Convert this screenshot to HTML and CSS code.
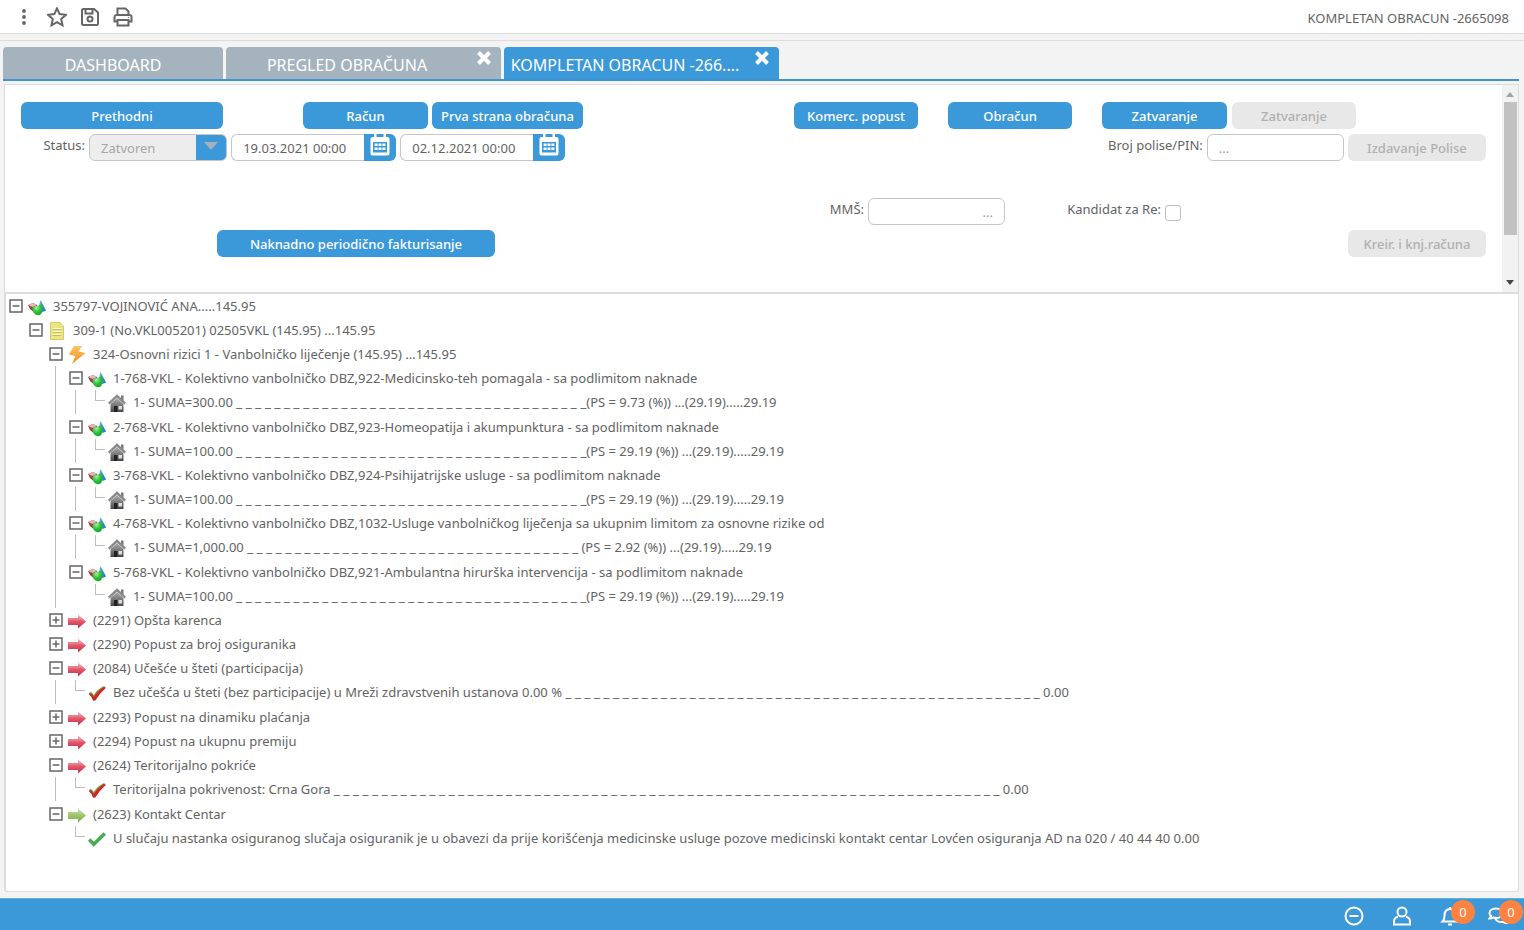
FILE: index.html
```html
<!DOCTYPE html>
<html lang="sr-Latn">
<head>
<meta charset="utf-8">
<meta name="viewport" content="width=device-width, initial-scale=1">
<title>Kompletan obracun</title>
<link rel="stylesheet" href="styles.css">
</head>
<body>
<svg class="symbols" aria-hidden="true">
  <defs>
    <linearGradient id="g-red" x1="0" y1="0" x2="0" y2="1"><stop offset="0" stop-color="#f9c3c9"/><stop offset=".5" stop-color="#e4566a"/><stop offset="1" stop-color="#c22a45"/></linearGradient>
    <linearGradient id="g-green" x1="0" y1="0" x2="0" y2="1"><stop offset="0" stop-color="#cfe0b4"/><stop offset=".5" stop-color="#9cc46a"/><stop offset="1" stop-color="#7fae4c"/></linearGradient>
    <linearGradient id="g-bolt" x1="0" y1="0" x2="0" y2="1"><stop offset="0" stop-color="#ffc45e"/><stop offset="1" stop-color="#f58a1f"/></linearGradient>
    <linearGradient id="g-house" x1="0" y1="0" x2="0" y2="1"><stop offset="0" stop-color="#b4b4b4"/><stop offset="1" stop-color="#4a4a4a"/></linearGradient>
    <radialGradient id="g-ball" cx=".4" cy=".3" r=".75"><stop offset="0" stop-color="#a4f0a0"/><stop offset=".5" stop-color="#2fc63c"/><stop offset="1" stop-color="#1c9a2c"/></radialGradient>
    <linearGradient id="g-cone" x1="0" y1="0" x2="1" y2="0"><stop offset="0" stop-color="#9ad6f2"/><stop offset=".5" stop-color="#3c9cd4"/><stop offset="1" stop-color="#1a6fb4"/></linearGradient>
  </defs>
  <symbol id="minus" viewBox="0 0 14 14"><path d="M1 1h12v12H1z" fill="none" stroke="#666" stroke-width="1.500"/><path d="M3.500 7h7" stroke="#666" stroke-width="1.500"/></symbol>
  <symbol id="plus" viewBox="0 0 14 14"><path d="M1 1h12v12H1z" fill="none" stroke="#666" stroke-width="1.500"/><path d="M3.500 7h7M7 3.500v7" stroke="#666" stroke-width="1.500"/></symbol>
  <symbol id="shapes" viewBox="0 0 18 18"><path d="M0 7 5 5l4 2v5l-4 1.500L2 11z" fill="#a03c46"/><path d="M0 7 5 5l4 2-4.500 2z" fill="#e3b8ba"/><path d="M12.500 2 18 12.500q-3.500 2.500-8.500.5z" fill="url(#g-cone)"/><path d="M4.500 9.500q1.500-2 4-1.500l5.500-1.500q2 8.500-2.500 10.500-4 .8-6-2.500-1.200-2.500-1-5z" fill="url(#g-ball)"/></symbol>
  <symbol id="note" viewBox="0 0 18 18"><path d="M2.500.5h9.500l3.500 4v13h-13z" fill="#ebe48b" stroke="#d6cb5c"/><path d="M12 .5v4h3.500z" fill="#fbf8cf" stroke="#d6cb5c" stroke-width=".7"/><path d="M4.500 6.500h9M4.500 9.500h9M4.500 12.500h9" stroke="#fbf8d0"/><path d="M4.500 7.500h9M4.500 10.500h9M4.500 13.500h9" stroke="#c9bd52"/></symbol>
  <symbol id="bolt" viewBox="0 0 18 18"><path d="M6 0h8l-3.500 5.500 7 1.500L4 18l3.500-8L1 8.500z" fill="url(#g-bolt)"/></symbol>
  <symbol id="house" viewBox="0 0 18 18"><path d="M2.500 9 9 3l6.500 6v9h-13z" fill="url(#g-house)"/><path d="M13 1.500h2.500V7L13 5z" fill="#777"/><path d="M1 10.800 9 3.200l8 7.600" fill="none" stroke="#e4e4e4" stroke-width="1.400"/><path d="M.8 9.600 9 1.800l8.200 7.800" fill="none" stroke="#8a8a8a" stroke-width="2.400"/><path d="M6 12h3.500v6H6z" fill="#222"/><path d="M10.500 12h3.500v3.500h-3.500z" fill="#ddd"/></symbol>
  <symbol id="arrow-red" viewBox="0 0 18 18"><path d="M0 6h10V2.500l8 7-8 7V13H0z" fill="url(#g-red)"/></symbol>
  <symbol id="arrow-green" viewBox="0 0 18 18"><path d="M0 6h10V2.500l8 7-8 7V13H0z" fill="url(#g-green)"/></symbol>
  <symbol id="check-red" viewBox="0 0 18 18"><path d="M.8 9.500q1.500-2.500 3-1l2 2.500Q9.500 5 16 2l1.700 1.500Q10 10 7 16.500H5Q3.500 12 .8 9.500z" fill="#7b9a4a"/><path d="M1 10.500q1.500-2 3 0l2 2.500Q10 6.500 16 3l1.800 1Q11 10 7.300 16.500H5.200Q4 12.500 1 10.500z" fill="#d3242a"/></symbol>
  <symbol id="check-green" viewBox="0 0 18 18"><path d="m1.200 9.500 4.600 4.800L16.800 3.500" fill="none" stroke="#47ab52" stroke-width="3.400"/></symbol>
  <symbol id="close" viewBox="0 0 14 14"><path d="m1.500 1.500 11 11M12.500 1.500l-11 11" stroke="currentColor" stroke-width="4"/></symbol>
  <symbol id="calendar" viewBox="0 0 20 22"><path fill-rule="evenodd" d="M2.500 3H4V0h2.500v3h7V0H16v3h1.500A2 2 0 0 1 19.500 5v14.500a2 2 0 0 1-2 2h-15a2 2 0 0 1-2-2V5a2 2 0 0 1 2-2zM3 8v10.500h14V8z" fill="#fff"/><path d="M4.600 9.500h3V12h-3zM8.500 9.500h3V12h-3zM12.400 9.500h3V12h-3zM4.600 13.500h3V16h-3zM8.500 13.500h3V16h-3zM12.400 13.500h3V16h-3z" fill="#fff"/></symbol>
</svg>

<header class="topbar">
  <div class="tools">
    <button class="tool" aria-label="Meni"><svg width="20" height="20"><g fill="#666"><circle cx="10" cy="4" r="1.900"/><circle cx="10" cy="10" r="1.900"/><circle cx="10" cy="16" r="1.900"/></g></svg></button>
    <button class="tool" aria-label="Omiljeno"><svg width="20" height="20"><path d="m10 1.300 2.600 5.800 6.300.7-4.700 4.200 1.300 6.300-5.500-3.200-5.500 3.200 1.300-6.300L1.100 7.800l6.300-.7z"/></svg></button>
    <button class="tool" aria-label="Snimi"><svg width="20" height="20"><path d="M3.500 2H14l4 3.500v11a1.500 1.500 0 0 1-1.500 1.500h-13A1.500 1.500 0 0 1 2 16.500v-13A1.500 1.500 0 0 1 3.500 2zM5.500 2.500v4h7v-4"/><circle cx="10" cy="12" r="2.500"/></svg></button>
    <button class="tool" aria-label="Štampaj"><svg width="20" height="20"><path d="M4.500 8V1.500h8l3 3V8M4.500 14.500h-3V10a2 2 0 0 1 2-2h13a2 2 0 0 1 2 2v4.500h-3M4.500 13h11v5.500h-11z"/><circle cx="15.500" cy="10.500" r=".3" stroke-width="1"/></svg></button>
  </div>
  <div class="doc-title">KOMPLETAN OBRACUN -2665098</div>
</header>

<main class="workspace">
  <nav class="tabs">
    <div class="tab tab-home"><button class="tab-name">DASHBOARD</button></div>
    <div class="tab"><button class="tab-name">PREGLED OBRAČUNA</button><button class="tab-close" aria-label="Zatvori"><svg width="14" height="14"><use href="#close"/></svg></button></div>
    <div class="tab tab-active"><button class="tab-name">KOMPLETAN OBRACUN -266....</button><button class="tab-close" aria-label="Zatvori"><svg width="14" height="14"><use href="#close"/></svg></button></div>
  </nav>

  <section class="panel">
    <form class="form">
      <div class="row row-actions">
        <button type="button" class="btn c1">Prethodni</button>
        <button type="button" class="btn c3">Račun</button>
        <button type="button" class="btn c5">Prva strana obračuna</button>
        <button type="button" class="btn c7">Komerc. popust</button>
        <button type="button" class="btn c9">Obračun</button>
        <button type="button" class="btn c11">Zatvaranje</button>
        <button type="button" class="btn c13" disabled>Zatvaranje</button>
      </div>
      <div class="row row-policy">
        <label class="label c1" for="status">Status:</label>
        <div class="select c2"><select id="status" disabled><option>Zatvoren</option></select><svg class="caret" width="14" height="8"><path d="M0 0h14L7 8z" fill="#a3b1ba"/></svg></div>
        <div class="date c3"><input type="text" aria-label="Datum od" value="19.03.2021 00:00"><button type="button" class="date-open" aria-label="Kalendar"><svg width="20" height="22"><use href="#calendar"/></svg></button></div>
        <div class="date c4"><input type="text" aria-label="Datum do" value="02.12.2021 00:00"><button type="button" class="date-open" aria-label="Kalendar"><svg width="20" height="22"><use href="#calendar"/></svg></button></div>
        <label class="label c5" for="pin">Broj polise/PIN:</label>
        <input class="field c6" id="pin" type="text" placeholder="...">
        <button type="button" class="btn c7" disabled>Izdavanje Polise</button>
      </div>
      <div class="row row-empty"></div>
      <div class="row row-extra">
        <label class="label c1" for="mms">MMŠ:</label>
        <input class="field field-right c2" id="mms" type="text" placeholder="...">
        <label class="label c3" for="re">Kandidat za Re:</label>
        <input class="tick c4" id="re" type="checkbox">
      </div>
      <div class="row row-invoice">
        <button type="button" class="btn c2">Naknadno periodično fakturisanje</button>
        <button type="button" class="btn c4" disabled>Kreir. i knj.računa</button>
      </div>
    </form>
    <div class="scrollbar" aria-hidden="true">
      <svg width="8" height="5"><path d="M0 5h8L4 0z" fill="#a3a3a3"/></svg>
      <div class="track"><div class="thumb"></div></div>
      <svg width="8" height="5"><path d="M0 0h8L4 5z" fill="#444"/></svg>
    </div>
  </section>

  <section class="tree-panel">
    <ul class="tree" id="tree"></ul>
  </section>
</main>

<footer class="statusbar">
  <button class="status-btn" aria-label="Umanji"><svg width="20" height="20"><circle cx="10" cy="10" r="8.500"/><path d="M5.500 10h9"/></svg></button>
  <button class="status-btn" aria-label="Korisnik"><svg width="20" height="20"><circle cx="10" cy="6" r="4.500"/><path d="M6 10.800a5 5 0 0 0-4 4.700v3h16v-3a5 5 0 0 0-4-4.700"/></svg></button>
  <button class="status-btn" aria-label="Obavještenja"><svg width="20" height="20"><path d="M10 1v2M2.500 15.500q2-2 2-5.500 0-7 5.500-7t5.500 7q0 3.500 2 5.500z"/><path d="M8 18.500h4"/></svg><span class="badge">0</span></button>
  <button class="status-btn" aria-label="Poruke"><svg width="20" height="20"><path d="M8 2.500c4 0 6.500 2 6.500 4.700S12 12 8 12q-1.500 0-3-.5-1.500 1-3.500 1 1.200-1.200 1.500-2.500-1.500-1.200-1.500-2.800C1.500 4.500 4 2.500 8 2.500zM7 12q1.500 4.500 8 4 1.500 1 3.500 1-1.200-1.200-1.500-2.500 3-3-.5-6"/></svg><span class="badge">0</span></button>
</footer>
<script src="tree.js"></script>
</body>
</html>
```
FILE: styles.css
```css
* { box-sizing: border-box; }
body {
  margin: 0;
  min-height: 100vh;
  display: flex;
  flex-direction: column;
  background: #f3f3f3;
  color: #636363;
  font: 13px/24px "Noto Sans", sans-serif;
}
button, input, select { font: inherit; color: inherit; margin: 0; }
button { border: 0; padding: 0; background: none; cursor: pointer; }
.symbols { position: absolute; width: 0; height: 0; }

.topbar {
  display: flex;
  align-items: center;
  justify-content: space-between;
  height: 34px;
  padding: 0 15px 0 14px;
  background: #fff;
  border-bottom: 1px solid #dcdcdc;
}
.tools { display: flex; gap: 13px; }
.tool { display: flex; }
.tool svg { fill: none; stroke: #666; stroke-width: 2; }
.tool g { stroke: none; }
.doc-title { padding-top: 2px; }

.workspace {
  flex: 1;
  display: flex;
  flex-direction: column;
  margin-top: 6px;
  padding: 6px 5px 6px 3px;
  border-top: 1px solid #dcdcdc;
}
.tabs {
  display: flex;
  gap: 3px;
  border-bottom: 2px solid #3f94cf;
}
.tab {
  display: flex;
  width: 275px;
  height: 32px;
  background: #a4b3be;
  border-radius: 4px 4px 0 0;
  color: #fff;
}
.tab-home { width: 220px; }
.tab-active { background: #3b99d9; }
.tab-name {
  flex: 1;
  min-width: 0;
  padding-top: 3px;
  font-size: 16px;
  white-space: nowrap;
}
.tab-close {
  display: flex;
  width: 33px;
  padding: 4px 0 0 9px;
}

.panel {
  display: flex;
  margin: 3px 0 0 1px;
  border: 1px solid #dcdcdc;
  border-width: 1px 1px 0 1px;
  background: #fff;
}
.form {
  flex: 1;
  display: flex;
  flex-direction: column;
  gap: 5px;
  padding: 17px 16px 35px;
}
.row { display: grid; height: 27px; }
.row-actions { grid-template-columns: 202fr 80fr 125fr 4px 151fr 211fr 124fr 30fr 124fr 30fr 125fr 5px 124fr 130fr; }
.row-policy { grid-template-columns: 64fr 138fr 165fr 165fr 633fr 137fr 138fr; gap: 4px; }
.row-extra { grid-template-columns: 843fr 137fr 152fr 321fr; gap: 4px; }
.row-invoice { grid-template-columns: 196fr 278fr 853fr 138fr; }
.row > * { min-width: 0; grid-row: 1; }
.c1 { grid-column: 1; }
.c2 { grid-column: 2; }
.c3 { grid-column: 3; }
.c4 { grid-column: 4; }
.c5 { grid-column: 5; }
.c6 { grid-column: 6; }
.c7 { grid-column: 7; }
.c9 { grid-column: 9; }
.c11 { grid-column: 11; }
.c13 { grid-column: 13; }

.btn {
  background: #3b99d9;
  border-radius: 6px;
  color: #fff;
  font-weight: 500;
  white-space: nowrap;
}
.btn:disabled { background: #e8e8e8; color: #b0b0b0; }
.label { line-height: 22px; text-align: right; white-space: nowrap; }
.field, .date input, .select select {
  width: 100%;
  border: 1px solid #c6c6c6;
  border-radius: 6px;
  background: #fff;
  padding: 0 11px;
  outline: 0;
}
.field::placeholder { color: #999; }
.field-right { text-align: right; }
.select, .date { display: flex; position: relative; }
.select select {
  appearance: none;
  opacity: 1;
  color: #a6a6a6;
  background: linear-gradient(to left, #3b99d9 30px, #ededed 30px);
}
.caret { position: absolute; right: 9px; top: 8px; }
.date input { flex: 1; min-width: 0; padding-right: 0; border-right: 0; border-radius: 6px 0 0 6px; }
.date-open {
  display: flex;
  justify-content: center;
  width: 32px;
  background: #3b99d9;
  border-radius: 0 6px 6px 0;
}
.tick {
  appearance: none;
  width: 16px;
  height: 16px;
  margin-top: 7px;
  border: 1px solid #bdbdbd;
  border-radius: 3px;
  background: #fff;
}

.scrollbar {
  display: flex;
  flex-direction: column;
  align-items: center;
  gap: 5px;
  width: 16px;
  padding: 7px 0;
  background: #f2f2f2;
}
.track { flex: 1; width: 13px; }
.thumb { height: 77%; background: #c1c1c1; }

.tree-panel {
  flex: 1;
  margin-left: 1px;
  border: 1px solid #dcdcdc;
  border-width: 2px 1px 1px 2px;
  border-radius: 0 0 3px 3px;
  background: #fff;
}
.tree, .tree ul { list-style: none; margin: 0; padding: 0; }
.tree { padding-left: 3px; }
.tree ul { margin-left: 6px; padding-left: 13px; border-left: 1px solid transparent; }
.tree ul.linked { border-left-color: #bdbdbd; }
.tree .spaced { padding-bottom: 1px; }
.node { display: flex; align-items: center; height: 24px; white-space: pre; }
.node > svg { flex: none; }
.toggle { width: 14px; height: 14px; display: flex; }
.node-icon { width: 18px; height: 18px; margin: 2px 7px 0 5px; }
.elbow {
  align-self: flex-start;
  width: 10px;
  height: 11px;
  margin: 0 -2px 0 6px;
  border: 1px solid #bdbdbd;
  border-width: 0 0 1px 1px;
}
.leader { font: 13px/24px "DejaVu Sans Condensed", "DejaVu Sans", sans-serif; }

.statusbar {
  display: flex;
  justify-content: flex-end;
  gap: 28px;
  height: 32px;
  padding-right: 16px;
  border-top: 1px solid #5fb0e6;
  background: #3b99d9;
}
.status-btn { position: relative; display: flex; padding-top: 7px; }
.status-btn svg { fill: none; stroke: #fff; stroke-width: 2; }
.badge {
  position: absolute;
  left: 11px;
  top: 1px;
  width: 24px;
  height: 24px;
  border-radius: 50%;
  background: #ff8340;
  color: #fff;
}
```
FILE: tree.js
```js
// [icon, text, options]; options: kids, linked, spaced, closed, dashes, tail
const cover = (text, sum, dashes, tail, linked, spaced) =>
  ["shapes", text, { linked, spaced, kids: [["house", "1- SUMA=" + sum + " ", { dashes, tail }]] }];

const data = [["shapes", "355797-VOJINOVIĆ ANA.....145.95", { kids: [
  ["note", "309-1 (No.VKL005201) 02505VKL (145.95) ...145.95", { kids: [
    ["bolt", "324-Osnovni rizici 1 - Vanbolničko liječenje (145.95) ...145.95", { linked: true, kids: [
      cover("1-768-VKL - Kolektivno vanbolničko DBZ,922-Medicinsko-teh pomagala - sa podlimitom naknade", "300.00", 37, "(PS = 9.73 (%)) ...(29.19).....29.19", true, true),
      cover("2-768-VKL - Kolektivno vanbolničko DBZ,923-Homeopatija i akumpunktura - sa podlimitom naknade", "100.00", 37, "(PS = 29.19 (%)) ...(29.19).....29.19", true),
      cover("3-768-VKL - Kolektivno vanbolničko DBZ,924-Psihijatrijske usluge - sa podlimitom naknade", "100.00", 37, "(PS = 29.19 (%)) ...(29.19).....29.19", true),
      cover("4-768-VKL - Kolektivno vanbolničko DBZ,1032-Usluge vanbolničkog liječenja sa ukupnim limitom za osnovne rizike od", "1,000.00", 35, " (PS = 2.92 (%)) ...(29.19).....29.19", true, true),
      cover("5-768-VKL - Kolektivno vanbolničko DBZ,921-Ambulantna hirurška intervencija - sa podlimitom naknade", "100.00", 37, "(PS = 29.19 (%)) ...(29.19).....29.19", false)
    ] }],
    ["arrow-red", "(2291) Opšta karenca", { closed: true }],
    ["arrow-red", "(2290) Popust za broj osiguranika", { closed: true }],
    ["arrow-red", "(2084) Učešće u šteti (participacija)", { linked: true, spaced: true, kids: [
      ["check-red", "Bez učešća u šteti (bez participacije) u Mreži zdravstvenih ustanova 0.00 % ", { dashes: 50, tail: " 0.00" }]
    ] }],
    ["arrow-red", "(2293) Popust na dinamiku plaćanja", { closed: true }],
    ["arrow-red", "(2294) Popust na ukupnu premiju", { closed: true }],
    ["arrow-red", "(2624) Teritorijalno pokriće", { linked: true, spaced: true, kids: [
      ["check-red", "Teritorijalna pokrivenost: Crna Gora ", { dashes: 70, tail: " 0.00" }]
    ] }],
    ["arrow-green", "(2623) Kontakt Centar", { kids: [
      ["check-green", "U slučaju nastanka osiguranog slučaja osiguranik je u obavezi da prije korišćenja medicinske usluge pozove medicinski kontakt centar Lovćen osiguranja AD na 020 / 40 44 40 0.00", {}]
    ] }]
  ] }]
] }]];

function render([icon, text, o]) {
  const handle = o.kids || o.closed
    ? `<button class="toggle" aria-label="${o.closed ? "Otvori" : "Zatvori"}"><svg width="14" height="14"><use href="#${o.closed ? "plus" : "minus"}"/></svg></button>`
    : `<span class="elbow"></span>`;
  const leader = o.dashes
    ? `<span class="leader">${Array(o.dashes).fill("_").join(" ")}</span><span>${o.tail}</span>`
    : "";
  const kids = o.kids ? `<ul class="${o.linked ? "linked" : ""}">${o.kids.map(render).join("")}</ul>` : "";
  return `<li class="${o.spaced ? "spaced" : ""}"><div class="node">${handle}<svg class="node-icon"><use href="#${icon}"/></svg><span>${text}</span>${leader}</div>${kids}</li>`;
}
document.getElementById("tree").innerHTML = data.map(render).join("");
```
